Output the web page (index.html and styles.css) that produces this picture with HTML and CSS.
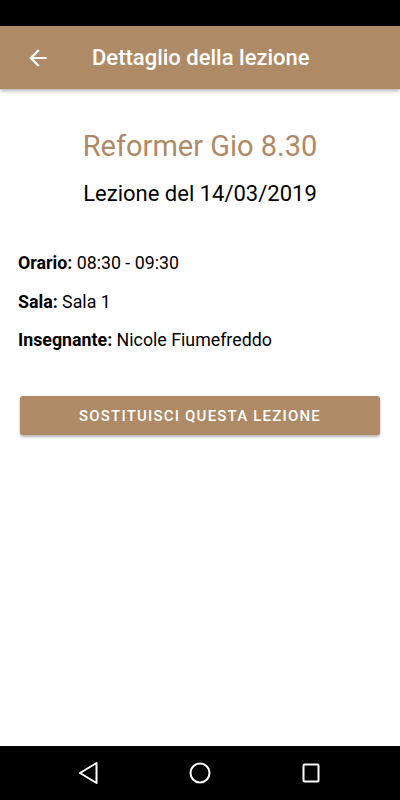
FILE: index.html
```html
<!DOCTYPE html>
<html lang="it">
<head>
  <meta charset="UTF-8" />
  <meta name="viewport" content="width=device-width, initial-scale=1" />
  <title>Dettaglio della lezione</title>
  <link rel="stylesheet" href="styles.css">
</head>
<body>
  <div class="status-bar"></div>

  <header class="app-bar">
    <button class="back-btn" aria-label="Indietro">
      <svg width="26" height="26" viewBox="0 0 24 24"><path fill="#fff" d="M20 11H7.83l5.59-5.59L12 4l-8 8 8 8 1.41-1.41L7.83 13H20v-2z"/></svg>
    </button>
    <h1>Dettaglio della lezione</h1>
  </header>

  <main class="content">
    <h2 class="lesson-name">Reformer Gio 8.30</h2>
    <h3 class="lesson-date">Lezione del 14/03/2019</h3>

    <ul class="info">
      <li><b>Orario:</b> 08:30 - 09:30</li>
      <li><b>Sala:</b> Sala 1</li>
      <li><b>Insegnante:</b> Nicole Fiumefreddo</li>
    </ul>

    <button class="action">Sostituisci questa lezione</button>
  </main>

  <nav class="nav-bar">
    <svg width="24" height="24" viewBox="0 0 24 24"><path d="M19.5 2 L3 12 L19.5 22 Z" fill="none" stroke="#fff" stroke-width="2" stroke-linejoin="round"/></svg>
    <svg width="24" height="24" viewBox="0 0 24 24"><circle cx="12" cy="12" r="9.5" fill="none" stroke="#fff" stroke-width="2"/></svg>
    <svg width="24" height="24" viewBox="0 0 24 24"><rect x="4.5" y="3.5" width="15" height="17" rx="1" fill="none" stroke="#fff" stroke-width="2"/></svg>
  </nav>
</body>
</html>
```

FILE: styles.css
```css
html, body {
  margin: 0;
  height: 100%;
}
body {
  font-family: Roboto, "Noto Sans", Arial, sans-serif;
  background: #fff;
  color: #000;
  display: flex;
  flex-direction: column;
}
.status-bar {
  height: 26px;
  background: #000;
}
.app-bar {
  height: 63px;
  background: #ae8a66;
  display: flex;
  align-items: center;
  box-shadow: 0 2px 4px rgba(0,0,0,0.3);
  position: relative;
  z-index: 1;
}
.back-btn {
  background: none;
  border: none;
  padding: 0;
  margin-left: 25px;
  width: 26px;
  height: 26px;
  display: flex;
}
.app-bar h1 {
  margin: 0 0 0 41px;
  color: #fff;
  font-size: 22px;
  font-weight: 500;
}
.content {
  flex: 1;
  padding: 0 20px;
}
.lesson-name {
  margin: 40px 0 0;
  text-align: center;
  color: #ae8a66;
  font-size: 29px;
  line-height: 34px;
  font-weight: 400;
}
.lesson-date {
  margin: 18px 0 0;
  text-align: center;
  font-size: 22px;
  line-height: 26px;
  font-weight: 400;
}
.info {
  list-style: none;
  margin: 45px 0 0 -2px;
  padding: 0;
}
.info li {
  font-size: 17.8px;
  line-height: 22px;
  margin-bottom: 16.5px;
}
.info li:last-child {
  margin-bottom: 0;
}
.info b {
  font-weight: 700;
}
.action {
  display: block;
  width: 100%;
  height: 39px;
  margin-top: 45px;
  background: #ae8a66;
  color: #fff;
  border: none;
  border-radius: 3px;
  font-family: inherit;
  font-size: 15px;
  font-weight: 500;
  letter-spacing: 1.2px;
  text-transform: uppercase;
  box-shadow: 0 2px 3px rgba(0,0,0,0.3);
}
.nav-bar {
  height: 54px;
  background: #000;
  display: flex;
  align-items: center;
  justify-content: space-between;
  padding: 0 77px;
}
```
